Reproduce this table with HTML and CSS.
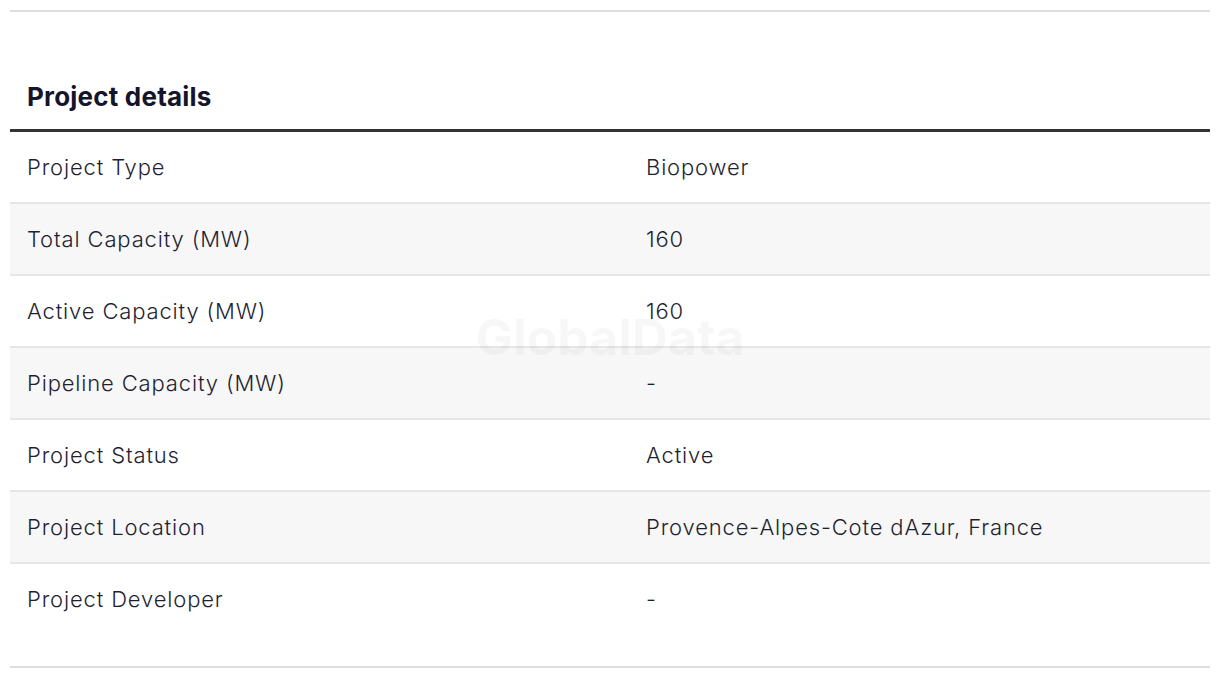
FILE: index.html
```html
<!DOCTYPE html>
<html>
<head>
<meta charset="utf-8">
<link rel="stylesheet" href="styles.css">
</head>
<body>
<div class="page">
  <div class="rule-top"></div>
  <section class="details">
    <h2 class="title">Project details</h2>
    <div class="table">
      <div class="row"><div class="cell">Project Type</div><div class="cell">Biopower</div></div>
      <div class="row alt"><div class="cell">Total Capacity (MW)</div><div class="cell">160</div></div>
      <div class="row"><div class="cell">Active Capacity (MW)</div><div class="cell">160</div></div>
      <div class="row alt"><div class="cell">Pipeline Capacity (MW)</div><div class="cell">-</div></div>
      <div class="row"><div class="cell">Project Status</div><div class="cell">Active</div></div>
      <div class="row alt"><div class="cell">Project Location</div><div class="cell">Provence-Alpes-Cote dAzur, France</div></div>
      <div class="row last"><div class="cell">Project Developer</div><div class="cell">-</div></div>
      <div class="watermark">GlobalData</div>
    </div>
  </section>
  <div class="rule-bottom"></div>
</div>
</body>
</html>
```

FILE: styles.css
```css
html, body {
  margin: 0;
  padding: 0;
  background: #ffffff;
}
.page {
  padding: 10px 10px 0 10px;
  font-family: "Inter", "Liberation Sans", sans-serif;
  color: #1c1c2e;
}
.rule-top {
  height: 2px;
  background: #dedede;
}
.details {
  padding-top: 67px;
}
.title {
  margin: 0;
  padding: 0 0 0 17px;
  font-size: 26px;
  font-weight: 700;
  line-height: 36px;
  color: #14142b;
  letter-spacing: 0.2px;
  border-bottom: 3px solid #333333;
  height: 50px;
}
.table {
  position: relative;
}
.row {
  display: grid;
  grid-template-columns: 619px 1fr;
  height: 70px;
  align-items: center;
  border-bottom: 2px solid #e6e6e6;
  font-size: 22px;
  font-weight: 300;
  letter-spacing: 0.85px;
  color: #1f1f33;
}
.row.alt {
  background: #f7f7f7;
}
.row.last {
  border-bottom: none;
}
.cell {
  padding-left: 17px;
}
.watermark {
  position: absolute;
  left: 0;
  right: 0;
  top: 178px;
  text-align: center;
  font-size: 50px;
  font-weight: 700;
  line-height: 54px;
  color: rgba(0, 0, 0, 0.03);
  pointer-events: none;
}
.rule-bottom {
  margin-top: 32px;
  height: 2px;
  background: #dedede;
}
```
